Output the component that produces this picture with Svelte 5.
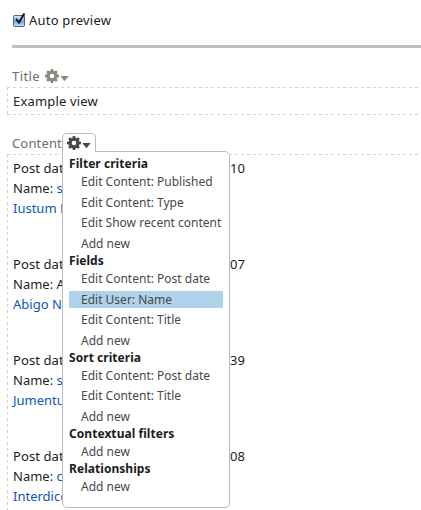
<script>
  const sections = [
    { title: 'Filter criteria', items: ['Edit Content: Published', 'Edit Content: Type', 'Edit Show recent content', 'Add new'] },
    { title: 'Fields', items: ['Edit Content: Post date', 'Edit User: Name', 'Edit Content: Title', 'Add new'] },
    { title: 'Sort criteria', items: ['Edit Content: Post date', 'Edit Content: Title', 'Add new'] },
    { title: 'Contextual filters', items: ['Add new'] },
    { title: 'Relationships', items: ['Add new'] }
  ];
  const active = 'Edit User: Name';
  const posts = [
    { name: 's', link: true, title: 'Iustum L', time: '10' },
    { name: 'A', link: false, title: 'Abigo N', time: '07' },
    { name: 's', link: true, title: 'Jumentum', time: '39' },
    { name: 'c', link: true, title: 'Interdico', time: '08' }
  ];
  const teeth = [0, 45, 90, 135, 180, 225, 270, 315];
</script>

{#snippet gear()}
  <svg class="gear" width="25" height="14" viewBox="0 0 25 14">
    <circle cx="7" cy="7" r="3.8" fill="none" stroke="currentColor" stroke-width="3" />
    {#each teeth as angle}
      <path d="M5.3 2.5 L5.8 0 H8.2 L8.7 2.5 Z" fill="currentColor" transform="rotate({angle} 7 7)" />
    {/each}
    <path d="M15.3 7 H23.7 L19.5 12.2 Z" fill="currentColor" />
  </svg>
{/snippet}

<main>
  <label class="preview">
    <svg width="14" height="18" viewBox="0 0 14 18">
      <defs>
        <linearGradient id="box" x1="0" y1="0" x2="0" y2="1">
          <stop offset="0" stop-color="#d5e6f8" />
          <stop offset=".45" stop-color="#8dbaea" />
          <stop offset=".55" stop-color="#6aa7e4" />
          <stop offset="1" stop-color="#b5ecff" />
        </linearGradient>
      </defs>
      <rect x="1.5" y="5.5" width="11" height="11" rx="1" fill="url(#box)" stroke="#4f6489" />
      <path d="M4 8.8 L7 12.6 L12.4 3.5" fill="none" stroke="#111" stroke-width="2" />
    </svg>
    <span>Auto preview</span>
  </label>
  <div class="rule"></div>

  <div class="heading title"><span>Title</span>{@render gear()}</div>
  <div class="field"><span>Example view</span></div>

  <div class="heading content">
    <span>Content</span>
    <div class="trigger">{@render gear()}</div>
    <div class="menu">
      {#each sections as section}
        <section>
          <h3><span>{section.title}</span></h3>
          <ul>
            {#each section.items as item}
              <li class:active={item === active}><span>{item}</span></li>
            {/each}
          </ul>
        </section>
      {/each}
    </div>
  </div>
  <div class="posts">
    {#each posts as post}
      <article>
        <div class="date"><span>Post date:</span><span class="time">{post.time}</span></div>
        <div>Name: <span class:link={post.link}>{post.name}</span></div>
        <div class="link">{post.title}</div>
      </article>
    {/each}
  </div>
</main>

<style>
  :global(body) { background: #fff; overflow: hidden; }
  main {
    width: 421px;
    height: 510px;
    overflow: hidden;
    display: flex;
    flex-direction: column;
    font: 13px/20px 'Noto Sans', 'Open Sans', sans-serif;
    color: #1c1c1c;
    white-space: nowrap;
  }
  svg { display: block; flex: none; }
  .preview { display: flex; height: 45px; padding: 10px 0 0 12px; gap: 3px; box-sizing: border-box; }
  .preview span { letter-spacing: .2px; }
  .rule { height: 3px; flex: none; margin-left: 12px; background: #bfbfbf; }
  .heading { display: flex; align-items: flex-start; color: #6e6e6e; padding-left: 12px; box-sizing: border-box; flex: none; letter-spacing: .15px; }
  .title { height: 39px; padding-top: 18px; gap: 5px; }
  .title span { letter-spacing: .4px; }
  .title .gear { color: #8a8a82; margin-top: 3px; }
  .field, .posts {
    flex: none;
    margin-left: 7px;
    box-sizing: border-box;
    background:
      repeating-linear-gradient(90deg, #d3d3d3 0 3px, transparent 3px 6px) 0 0 / 100% 1px no-repeat,
      repeating-linear-gradient(180deg, #d3d3d3 0 3px, transparent 3px 6px) 0 0 / 1px 100% no-repeat;
  }
  .field {
    height: 28px;
    padding: 5px 0 0 6px;
    line-height: 19px;
    letter-spacing: .18px;
    background:
      repeating-linear-gradient(90deg, #d3d3d3 0 3px, transparent 3px 6px) 0 0 / 100% 1px no-repeat,
      repeating-linear-gradient(90deg, #d3d3d3 0 3px, transparent 3px 6px) 0 100% / 100% 1px no-repeat,
      repeating-linear-gradient(180deg, #d3d3d3 0 3px, transparent 3px 6px) 0 0 / 1px 100% no-repeat;
  }
  .content { position: relative; height: 39px; padding-top: 18px; }
  .trigger {
    position: absolute;
    left: 62px;
    top: 18px;
    width: 34px;
    height: 19px;
    box-sizing: border-box;
    border: 1px solid #bbb;
    border-bottom: 0;
    border-radius: 5px 5px 0 0;
    background: #fff;
    color: #484848;
    padding: 2px 0 0 4px;
    z-index: 3;
  }
  .menu {
    position: absolute;
    left: 62px;
    top: 36px;
    width: 168px;
    height: 357px;
    box-sizing: border-box;
    border: 1px solid #bbb;
    border-radius: 0 5px 5px 5px;
    background: #fff;
    padding: 3.2px 6px 0;
    z-index: 2;
    font-size: 12px;
    letter-spacing: 0;
    color: #484848;
  }
  h3 { margin: 0; height: 18px; font-size: 12px; line-height: 18px; font-weight: 700; letter-spacing: .05px; color: #1c1c1c; }
  ul { list-style: none; margin: 0; padding: 0; display: flex; flex-direction: column; gap: 3.6px; }
  li { height: 17px; line-height: 17px; padding-left: 12px; }
  .active { background: #aed2ea; }
  .posts { height: 356px; padding: 4px 0 0 6px; display: flex; flex-direction: column; gap: 36px; }
  article { height: 60px; flex: none; }
  .date { display: flex; width: 232px; justify-content: space-between; letter-spacing: .1px; }
  .link { color: #0b58b5; }
</style>
